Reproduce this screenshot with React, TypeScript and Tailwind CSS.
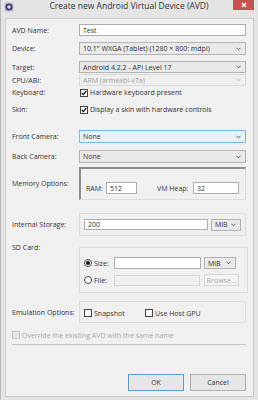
import type { ReactNode } from "react";

const Chevron = ({ dim = false }: { dim?: boolean }) => (
  <svg width="5" height="4" viewBox="0 0 5 4" className="shrink-0">
    <path d="M0.5 0.8 L2.5 2.8 L4.5 0.8" fill="none" stroke={dim ? "#b5b5b5" : "#555"} strokeWidth="1" />
  </svg>
);

const Label = ({ children, className = "" }: { children: ReactNode; className?: string }) => (
  <div className={`w-[67px] shrink-0 whitespace-nowrap text-[#333] ${className}`}>{children}</div>
);

const TextBox = ({ value = "", className = "", disabled = false }: { value?: string; className?: string; disabled?: boolean }) => (
  <div
    className={`flex items-center px-[3px] border ${disabled ? "bg-[#f0f0f0] border-[#d5d5d5]" : "bg-white border-[#abadb3]"} ${className}`}
  >
    {value}
  </div>
);

const Combo = ({
  value,
  className = "",
  disabled = false,
  focused = false,
}: {
  value: string;
  className?: string;
  disabled?: boolean;
  focused?: boolean;
}) => (
  <div
    className={`flex items-center justify-between pl-[3px] pr-[4px] border whitespace-nowrap ${
      focused
        ? "bg-[#e5f1fb] border-[#7eb4ea]"
        : disabled
        ? "bg-[#efefef] border-[#d9d9d9] text-[#a0a0a0]"
        : "bg-[#e9e9e9] border-[#b4b4b4]"
    } ${className}`}
  >
    <span>{value}</span>
    <Chevron dim={disabled} />
  </div>
);

const Check = ({ checked = false, disabled = false }: { checked?: boolean; disabled?: boolean }) => (
  <div
    className={`w-[8px] h-[8px] shrink-0 flex items-center justify-center border ${
      disabled ? "border-[#c8c8c8] bg-[#e6e6e6]" : "border-[#444] bg-white"
    }`}
  >
    {checked && (
      <svg width="6" height="6" viewBox="0 0 6 6">
        <path d="M0.8 3 L2.4 4.6 L5.2 1" fill="none" stroke="#111" strokeWidth="1.3" />
      </svg>
    )}
  </div>
);

const Radio = ({ checked = false }: { checked?: boolean }) => (
  <div className="w-[8px] h-[8px] shrink-0 rounded-full border border-[#444] bg-white flex items-center justify-center">
    {checked && <div className="w-[4px] h-[4px] rounded-full bg-[#111]" />}
  </div>
);

const Button = ({ children, primary = false }: { children: ReactNode; primary?: boolean }) => (
  <div
    className={`w-[56px] h-[17px] flex items-center justify-center border bg-[#e6e6e6] text-[#333] ${
      primary ? "border-[#5b9bd0]" : "border-[#b0b0b0]"
    }`}
  >
    {children}
  </div>
);

export default function App() {
  return (
    <div
      className="w-[258px] h-[400px] overflow-hidden bg-[#e4e4e4] border-l border-[#b8b8b8] flex flex-col text-[7px] leading-none text-[#333]"
      style={{ fontFamily: '"Open Sans", "Noto Sans", sans-serif' }}
    >
      {/* title bar */}
      <div className="h-[18px] shrink-0 flex items-start">
        <div className="w-[12px] h-[12px] mt-[1px] ml-[2px] flex items-center justify-center">
          <svg width="10" height="10" viewBox="0 0 10 10">
            <rect x="0.5" y="0.5" width="9" height="9" rx="1.5" fill="#bdbdd6" />
            <circle cx="5" cy="5" r="3.6" fill="#3f3a6b" />
            <circle cx="5" cy="5" r="1.8" fill="#d9d7ea" />
          </svg>
        </div>
        <div className="flex-1 text-center text-[8.5px] text-[#333] pt-[2px] pl-[10px] whitespace-nowrap">
          Create new Android Virtual Device (AVD)
        </div>
        <div className="w-[21px] h-[10px] mr-[4px] bg-[#c75050] flex items-center justify-center">
          <svg width="6" height="6" viewBox="0 0 6 6">
            <path d="M1 1 L5 5 M5 1 L1 5" stroke="#fff" strokeWidth="1.4" />
          </svg>
        </div>
      </div>

      {/* dialog body */}
      <div className="flex-1 mx-[4px] mb-[3px] bg-[#f0f0f0] border border-[#cbcbcb] pl-[6px] pr-[7px] pt-[5px] flex flex-col">
        <div className="flex items-center h-[12px]">
          <Label>AVD Name:</Label>
          <TextBox value="Test" className="flex-1 h-[12px]" />
        </div>

        <div className="flex items-center h-[13px] mt-[6px]">
          <Label>Device:</Label>
          <Combo value={'10.1" WXGA (Tablet) (1280 × 800: mdpi)'} className="flex-1 h-[13px]" />
        </div>

        <div className="flex items-center h-[12px] mt-[6px]">
          <Label>Target:</Label>
          <Combo value="Android 4.2.2 - API Level 17" className="flex-1 h-[12px]" />
        </div>

        <div className="flex items-center h-[12px] mt-[1px]">
          <Label>CPU/ABI:</Label>
          <Combo value="ARM (armeabi-v7a)" disabled className="flex-1 h-[12px]" />
        </div>

        <div className="flex items-center h-[11px] mt-[1px]">
          <Label>Keyboard:</Label>
          <div className="flex items-center gap-[2px] ml-[1px]">
            <Check checked />
            <span>Hardware keyboard present</span>
          </div>
        </div>

        <div className="flex items-center h-[11px] mt-[6px]">
          <Label>Skin:</Label>
          <div className="flex items-center gap-[2px] ml-[1px]">
            <Check checked />
            <span>Display a skin with hardware controls</span>
          </div>
        </div>

        <div className="flex items-center h-[13px] mt-[15px]">
          <Label>Front Camera:</Label>
          <Combo value="None" focused className="flex-1 h-[13px]" />
        </div>

        <div className="flex items-center h-[13px] mt-[7px]">
          <Label>Back Camera:</Label>
          <Combo value="None" className="flex-1 h-[13px]" />
        </div>

        <div className="flex items-center mt-[4px]">
          <Label>Memory Options:</Label>
          <div className="flex-1 h-[33px] border-t-2 border-l-2 border-t-[#8e8e8e] border-l-[#8e8e8e] border-r border-b border-r-[#dcdcdc] border-b-[#dcdcdc] flex items-end pb-[5px] pl-[5px] pr-[5px]">
            <div className="flex items-center h-[12px]">
              <span className="w-[20px]">RAM:</span>
              <TextBox value="512" className="w-[31px] h-[12px]" />
              <span className="ml-[20px] w-[36px]">VM Heap:</span>
              <TextBox value="32" className="w-[46px] h-[12px]" />
            </div>
          </div>
        </div>

        <div className="flex items-center mt-[13px]">
          <Label>Internal Storage:</Label>
          <div className="flex-1 h-[23px] border border-[#dcdcdc] flex items-center pl-[4px] pr-[4px]">
            <TextBox value="200" className="flex-1 h-[11px]" />
            <Combo value="MiB" className="w-[30px] h-[12px] ml-[3px]" />
          </div>
        </div>

        <div className="flex items-start mt-[6px]">
          <Label className="h-[10px] flex items-center">SD Card:</Label>
          <div className="flex-1 h-[46px] mt-[5px] border border-[#dcdcdc] flex flex-col pl-[4px] pr-[8px] pt-[9px]">
            <div className="flex items-center h-[12px]">
              <Radio checked />
              <span className="ml-[2px] w-[20px]">Size:</span>
              <TextBox className="w-[87px] h-[12px]" />
              <Combo value="MiB" className="w-[32px] h-[12px] ml-[3px]" />
            </div>
            <div className="flex items-center h-[12px] mt-[5px]">
              <Radio />
              <span className="ml-[2px] w-[20px]">File:</span>
              <TextBox disabled className="w-[86px] h-[11px]" />
              <div className="w-[35px] h-[12px] ml-[4px] border border-[#d5d5d5] bg-[#f4f4f4] text-[#a8a8a8] flex items-center justify-center">
                Browse...
              </div>
            </div>
          </div>
        </div>

        <div className="flex items-center mt-[8px]">
          <Label>Emulation Options:</Label>
          <div className="flex-1 h-[22px] border border-[#dcdcdc] flex items-center pl-[4px] pt-[2px]">
            <Check />
            <span className="ml-[2px] w-[51px]">Snapshot</span>
            <Check />
            <span className="ml-[2px]">Use Host GPU</span>
          </div>
        </div>

        <div className="flex items-center h-[10px] mt-[7px]">
          <Check disabled />
          <span className="ml-[2px] text-[#a8a8a8]">Override the existing AVD with the same name</span>
        </div>

        <div className="h-px bg-[#c4c4c4] mt-[4px]" />

        <div className="flex justify-end gap-[6px] mt-[29px]">
          <Button primary>OK</Button>
          <Button>Cancel</Button>
        </div>
      </div>
    </div>
  );
}
